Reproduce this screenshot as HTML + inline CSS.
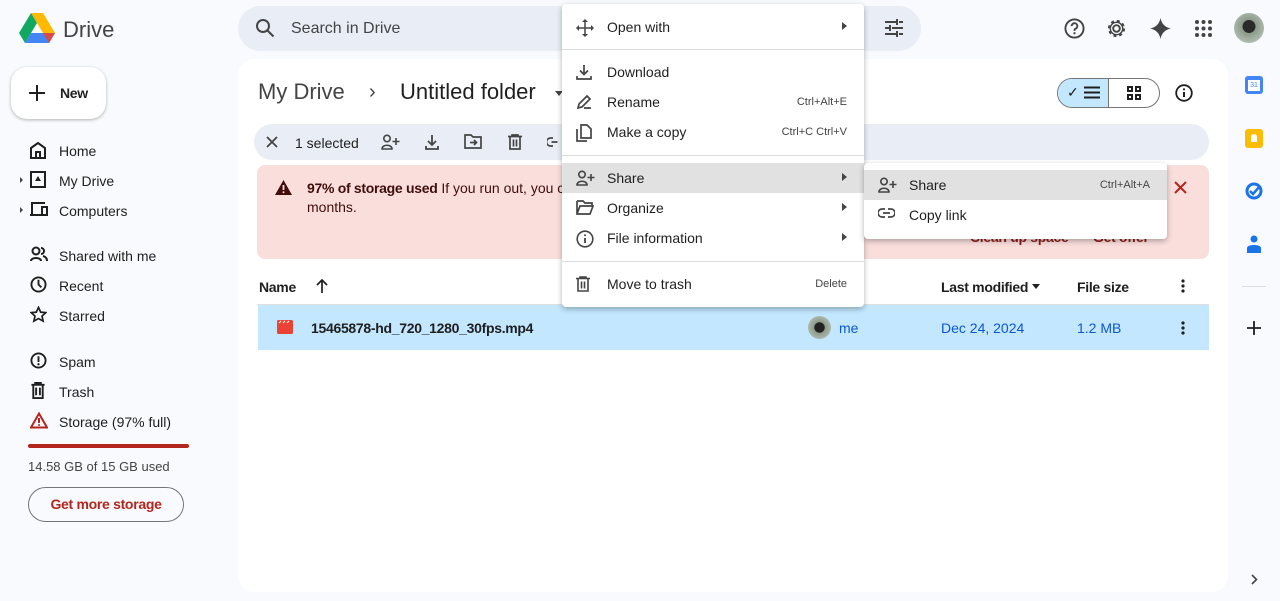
<!DOCTYPE html><html><head><style>
*{box-sizing:border-box;margin:0;padding:0}
body{width:1280px;height:601px;background:#f8fafd;font-family:"Liberation Sans",sans-serif;color:#1f1f1f;position:relative;overflow:hidden;font-size:14px}
.a{position:absolute}
svg{display:block}
.nav{position:absolute;left:30px;font-size:14px;color:#1f1f1f}
.nav svg{position:absolute;left:0;top:-2px}
.nav span{position:absolute;left:29px;top:0;white-space:nowrap}
.mi{position:absolute;left:0;width:302px;height:30px;font-size:14px}
.mi svg{position:absolute;left:14px;top:7px}
.mi .t{position:absolute;left:45px;top:7px}
.mi .k{position:absolute;right:17px;top:9px;font-size:11px;color:#444}
.mi .ar{position:absolute;right:17px;top:10px;width:0;height:0;border-left:5px solid #444;border-top:4px solid transparent;border-bottom:4px solid transparent}
.sep{position:absolute;left:0;width:302px;height:1px;background:#dadce0}
.b{font-weight:bold;letter-spacing:-0.3px}
</style></head><body>
<svg class="a" style="left:19px;top:12px" width="36" height="32" viewBox="0 0 36 32"><path d="M12 1h12l12 20h-12z" fill="#ffba00"/><path d="M12 1L0 21l6 10 12-20z" fill="#11a861"/><path d="M6 31h24l6-10H12z" fill="#4285f4"/><path d="M24 21h12l-6 10z" fill="#ea4335" opacity=".9"/></svg>
<div class="a" style="left:63px;top:17px;font-size:22px;color:#444">Drive</div>
<div class="a" style="left:238px;top:6px;width:683px;height:45px;border-radius:24px;background:#e9eef6"></div>
<svg class="a" style="left:255px;top:18px" width="20" height="20" viewBox="0 0 20 20"><circle cx="8" cy="8" r="6" fill="none" stroke="#444" stroke-width="2"/><path d="M12.5 12.5l6 6" stroke="#444" stroke-width="2"/></svg>
<div class="a" style="left:291px;top:20px;font-size:16px;color:#444">Search in Drive</div>
<svg class="a" style="left:884px;top:19px" width="20" height="18" viewBox="0 0 20 18"><path d="M1 3h11M15 3h4M1 9h4M8 9h11M1 15h11M15 15h4M13 0v6M6 6v6M13 12v6" stroke="#444" stroke-width="2"/></svg>
<svg class="a" style="left:1064px;top:18px" width="21" height="21" viewBox="0 0 22 22"><circle cx="11" cy="11" r="9.5" fill="none" stroke="#444" stroke-width="2"/><path d="M8 8.5a3 3 0 1 1 4 2.8c-1 .4-1 1.2-1 2.2" fill="none" stroke="#444" stroke-width="2"/><circle cx="11" cy="16" r="1.2" fill="#444"/></svg>
<svg class="a" style="left:1106px;top:18px" width="21" height="21" viewBox="0 0 22 22"><circle cx="11" cy="11" r="3.5" fill="none" stroke="#444" stroke-width="2"/><circle cx="11" cy="11" r="7.5" fill="none" stroke="#444" stroke-width="3" stroke-dasharray="3 2.9"/><circle cx="11" cy="11" r="6.5" fill="none" stroke="#444" stroke-width="1.5"/></svg>
<svg class="a" style="left:1150px;top:18px" width="21" height="21" viewBox="0 0 22 22"><path d="M11 0C12 6 16 10 22 11 16 12 12 16 11 22 10 16 6 12 0 11 6 10 10 6 11 0z" fill="#444"/></svg>
<svg class="a" style="left:1195px;top:20px" width="17" height="17" viewBox="0 0 17 17" fill="#444"><circle cx="2" cy="2" r="2"/><circle cx="8.5" cy="2" r="2"/><circle cx="15" cy="2" r="2"/><circle cx="2" cy="8.5" r="2"/><circle cx="8.5" cy="8.5" r="2"/><circle cx="15" cy="8.5" r="2"/><circle cx="2" cy="15" r="2"/><circle cx="8.5" cy="15" r="2"/><circle cx="15" cy="15" r="2"/></svg>
<div class="a" style="left:1234px;top:13px;width:30px;height:30px;border-radius:50%;background:radial-gradient(circle at 50% 45%,#2a2a2a 28%,#8a9a8a 30%,#c8d0c8)"></div>
<div class="a" style="left:11px;top:67px;width:95px;height:52px;border-radius:16px;background:#fff;box-shadow:0 1px 3px rgba(0,0,0,.3)"></div>
<svg class="a" style="left:28px;top:84px" width="18" height="18" viewBox="0 0 18 18"><path d="M9 1v16M1 9h16" stroke="#1f1f1f" stroke-width="2"/></svg>
<div class="a b" style="left:60px;top:85px;font-size:14px;color:#1f1f1f">New</div>
<div class="nav" style="top:143px"><svg width="16" height="18" viewBox="0 0 16 18"><path d="M1 7l7-5 7 5v10H1z M6 17v-6h4v6" fill="none" stroke="#1f1f1f" stroke-width="2"/></svg><span>Home</span></div>
<div class="a" style="left:20px;top:177px;border-left:3px solid #444;border-top:3px solid transparent;border-bottom:3px solid transparent"></div>
<div class="nav" style="top:173px"><svg width="16" height="18" viewBox="0 0 16 18"><rect x="1" y="1" width="14" height="15" fill="none" stroke="#1f1f1f" stroke-width="2"/><path d="M5 10l3-5 3 5z" fill="#1f1f1f"/></svg><span>My Drive</span></div>
<div class="a" style="left:20px;top:207px;border-left:3px solid #444;border-top:3px solid transparent;border-bottom:3px solid transparent"></div>
<div class="nav" style="top:203px"><svg width="18" height="16" viewBox="0 0 18 16"><path d="M2 13V2h13M0 14h11" fill="none" stroke="#1f1f1f" stroke-width="2"/><rect x="12" y="6" width="5" height="8" fill="none" stroke="#1f1f1f" stroke-width="2"/></svg><span>Computers</span></div>
<div class="nav" style="top:248px"><svg width="18" height="16" viewBox="0 0 18 16"><circle cx="6" cy="5" r="3.5" fill="none" stroke="#1f1f1f" stroke-width="2"/><path d="M1 15c0-4 10-4 10 0M11 2a3 3 0 0 1 0 6M13 10c2 .5 4 2 4 5" fill="none" stroke="#1f1f1f" stroke-width="2"/></svg><span>Shared with me</span></div>
<div class="nav" style="top:278px"><svg width="17" height="17" viewBox="0 0 18 18"><circle cx="9" cy="9" r="7.5" fill="none" stroke="#1f1f1f" stroke-width="2"/><path d="M9 4v5l3 3" fill="none" stroke="#1f1f1f" stroke-width="2"/></svg><span>Recent</span></div>
<div class="nav" style="top:308px"><svg width="17" height="17" viewBox="0 0 18 18"><path d="M9 1.5l2.3 5 5.4.5-4 3.7 1.2 5.3L9 13.3 4.1 16l1.2-5.3-4-3.7 5.4-.5z" fill="none" stroke="#1f1f1f" stroke-width="1.8"/></svg><span>Starred</span></div>
<div class="nav" style="top:354px"><svg width="17" height="17" viewBox="0 0 18 18"><circle cx="9" cy="9" r="7.5" fill="none" stroke="#1f1f1f" stroke-width="2"/><path d="M9 4.5v6" stroke="#1f1f1f" stroke-width="2"/><circle cx="9" cy="13" r="1.2" fill="#1f1f1f"/></svg><span>Spam</span></div>
<div class="nav" style="top:384px"><svg width="16" height="17" viewBox="0 0 16 18"><path d="M1 3h14M5 3V1h6v2M3 3v14h10V3M6 6v8M10 6v8" fill="none" stroke="#1f1f1f" stroke-width="2"/></svg><span>Trash</span></div>
<div class="nav" style="top:414px"><svg width="18" height="17" viewBox="0 0 18 17"><path d="M9 1.5L1 15.5h16z" fill="none" stroke="#b3261e" stroke-width="2"/><path d="M9 6v5" stroke="#b3261e" stroke-width="2"/><circle cx="9" cy="13" r="1" fill="#b3261e"/></svg><span>Storage (97% full)</span></div>
<div class="a" style="left:28px;top:444px;width:161px;height:4px;border-radius:2px;background:#b3261e"></div>
<div class="a" style="left:28px;top:459px;font-size:13px;color:#444">14.58 GB of 15 GB used</div>
<div class="a b" style="left:28px;top:487px;width:156px;height:35px;border:1px solid #747775;border-radius:18px;color:#b3261e;font-size:14px;text-align:center;line-height:33px">Get more storage</div>
<div class="a" style="left:238px;top:59px;width:990px;height:533px;background:#fff;border-radius:16px"></div>
<div class="a" style="left:258px;top:79px;font-size:22px;color:#444">My Drive</div>
<div class="a" style="left:369px;top:81px;font-size:20px;color:#444">›</div>
<div class="a" style="left:400px;top:79px;font-size:22px;color:#1f1f1f">Untitled folder</div>
<div class="a" style="left:555px;top:91px;border-top:5px solid #444;border-left:4px solid transparent;border-right:4px solid transparent"></div>
<div class="a" style="left:1057px;top:78px;width:103px;height:30px;border:1px solid #747775;border-radius:16px;overflow:hidden;background:#fff"><div style="width:51px;height:100%;background:#c2e7ff;border-right:1px solid #747775"></div></div>
<div class="a" style="left:1067px;top:84px;font-size:14px;color:#1f1f1f">✓</div>
<svg class="a" style="left:1084px;top:86px" width="16" height="13" viewBox="0 0 16 13"><path d="M0 1.5h16M0 6.5h16M0 11.5h16" stroke="#1f1f1f" stroke-width="2"/></svg>
<svg class="a" style="left:1127px;top:86px" width="14" height="14" viewBox="0 0 14 14" fill="none" stroke="#1f1f1f" stroke-width="2"><rect x="1" y="1" width="4" height="4"/><rect x="9" y="1" width="4" height="4"/><rect x="1" y="9" width="4" height="4"/><rect x="9" y="9" width="4" height="4"/></svg>
<svg class="a" style="left:1175px;top:84px" width="18" height="18" viewBox="0 0 18 18"><circle cx="9" cy="9" r="7.8" fill="none" stroke="#1f1f1f" stroke-width="1.8"/><path d="M9 8v5" stroke="#1f1f1f" stroke-width="2"/><circle cx="9" cy="5.3" r="1.1" fill="#1f1f1f"/></svg>
<div class="a" style="left:254px;top:124px;width:955px;height:36px;border-radius:18px;background:#e9eef6"></div>
<svg class="a" style="left:266px;top:136px" width="12" height="12" viewBox="0 0 12 12"><path d="M1 1l10 10M11 1L1 11" stroke="#444" stroke-width="1.8"/></svg>
<div class="a" style="left:295px;top:135px;font-size:14px;color:#1f1f1f">1 selected</div>
<svg class="a" style="left:381px;top:134px" width="19" height="16" viewBox="0 0 19 16" fill="none" stroke="#444" stroke-width="1.6"><circle cx="6" cy="4.5" r="3.2"/><path d="M1 15c0-5 10-5 10 0zM15 4v7M11.5 7.5h7"/></svg>
<svg class="a" style="left:425px;top:134px" width="14" height="16" viewBox="0 0 14 16" fill="none" stroke="#444" stroke-width="1.8"><path d="M7 1v10M3 7l4 4 4-4M1 12v3h12v-3"/></svg>
<svg class="a" style="left:464px;top:134px" width="18" height="15" viewBox="0 0 18 15" fill="none" stroke="#444" stroke-width="1.7"><path d="M1 1h6l2 2h8v11H1zM6 8.5h6M10 6l2.5 2.5L10 11"/></svg>
<svg class="a" style="left:508px;top:134px" width="14" height="16" viewBox="0 0 14 16" fill="none" stroke="#444" stroke-width="1.7"><path d="M0 2.5h14M4 2.5V1h6v1.5M2 2.5V15h10V2.5M5.5 5.5v7M8.5 5.5v7"/></svg>
<svg class="a" style="left:547px;top:136px" width="15" height="12" viewBox="0 0 15 12" fill="none" stroke="#444" stroke-width="1.7"><path d="M6 2H3.5a4 4 0 0 0 0 8H6M4.5 6h6"/></svg>
<div class="a" style="left:257px;top:165px;width:952px;height:94px;border-radius:8px;background:#f9dedc"></div>
<svg class="a" style="left:275px;top:180px" width="17" height="15" viewBox="0 0 17 15"><path d="M8.5 0L17 15H0z" fill="#410e0b"/><path d="M8.5 5v5" stroke="#f9dedc" stroke-width="1.8"/><circle cx="8.5" cy="12.2" r="1" fill="#f9dedc"/></svg>
<div class="a" style="left:307px;top:180px;font-size:14px;color:#410e0b;white-space:nowrap"><b style="letter-spacing:-0.3px">97% of storage used</b> If you run out, you ca</div>
<div class="a" style="left:307px;top:199px;font-size:14px;color:#410e0b">months.</div>
<div class="a b" style="left:970px;top:229px;font-size:14px;color:#8c1d18">Clean up space</div>
<div class="a b" style="left:1093px;top:229px;font-size:14px;color:#8c1d18">Get offer</div>
<svg class="a" style="left:1174px;top:181px" width="13" height="13" viewBox="0 0 13 13"><path d="M1 1l11 11M12 1L1 12" stroke="#b3261e" stroke-width="2"/></svg>
<div class="a b" style="left:259px;top:279px;font-size:14px;color:#1f1f1f">Name</div>
<svg class="a" style="left:316px;top:279px" width="12" height="14" viewBox="0 0 12 14"><path d="M6 14V2M1 6l5-5 5 5" fill="none" stroke="#1f1f1f" stroke-width="1.7"/></svg>
<div class="a b" style="left:941px;top:279px;font-size:14px;color:#1f1f1f">Last modified</div>
<div class="a" style="left:1032px;top:284px;border-top:5px solid #1f1f1f;border-left:4px solid transparent;border-right:4px solid transparent"></div>
<div class="a b" style="left:1077px;top:279px;font-size:14px;color:#1f1f1f">File size</div>
<svg class="a" style="left:1181px;top:279px" width="4" height="14" viewBox="0 0 4 14" fill="#1f1f1f"><circle cx="2" cy="2" r="1.6"/><circle cx="2" cy="7" r="1.6"/><circle cx="2" cy="12" r="1.6"/></svg>
<div class="a" style="left:257px;top:304px;width:952px;height:1px;background:#e0e0e0"></div>
<div class="a" style="left:258px;top:305px;width:951px;height:45px;background:#c2e7ff"></div>
<svg class="a" style="left:277px;top:320px" width="16" height="14" viewBox="0 0 16 14"><rect width="16" height="14" rx="1.5" fill="#ea4335"/><path d="M2 3l2-2M6 3l2-2M10 3l2-2" stroke="#fff" stroke-width="1"/></svg>
<div class="a b" style="left:311px;top:320px;font-size:14px;color:#1f1f1f">15465878-hd_720_1280_30fps.mp4</div>
<div class="a" style="left:808px;top:316px;width:23px;height:23px;border-radius:50%;background:radial-gradient(circle at 50% 50%,#222 30%,#8a9a8a 34%,#c8d0c8)"></div>
<div class="a" style="left:839px;top:320px;font-size:14px;color:#0b57d0">me</div>
<div class="a" style="left:941px;top:320px;font-size:14px;color:#0b57d0">Dec 24, 2024</div>
<div class="a" style="left:1077px;top:320px;font-size:14px;color:#0b57d0">1.2 MB</div>
<svg class="a" style="left:1181px;top:321px" width="4" height="14" viewBox="0 0 4 14" fill="#1f1f1f"><circle cx="2" cy="2" r="1.6"/><circle cx="2" cy="7" r="1.6"/><circle cx="2" cy="12" r="1.6"/></svg>
<div class="a" style="left:1245px;top:76px;width:18px;height:18px;border-radius:3px;background:#4285f4"><div style="margin:4px 3px;width:12px;height:11px;background:#fff;font-size:7px;color:#4285f4;text-align:center;line-height:11px">31</div></div>
<div class="a" style="left:1245px;top:129px;width:18px;height:19px;border-radius:3px;background:#fbbc04"><div style="margin:5px auto;width:6px;height:8px;border-radius:3px 3px 1px 1px;background:#fff"></div></div>
<svg class="a" style="left:1245px;top:182px" width="18" height="18" viewBox="0 0 18 18"><circle cx="9" cy="9" r="7" fill="none" stroke="#1a73e8" stroke-width="3"/><path d="M5 9l3 3 7-8" fill="none" stroke="#1a73e8" stroke-width="2.5"/></svg>
<svg class="a" style="left:1247px;top:235px" width="14" height="18" viewBox="0 0 14 18" fill="#1a73e8"><circle cx="7" cy="4" r="3.5"/><path d="M0 18v-5c0-4 14-4 14 0v5z"/></svg>
<div class="a" style="left:1242px;top:286px;width:24px;height:1px;background:#dadce0"></div>
<svg class="a" style="left:1247px;top:321px" width="14" height="14" viewBox="0 0 14 14"><path d="M7 0v14M0 7h14" stroke="#1f1f1f" stroke-width="1.8"/></svg>
<svg class="a" style="left:1251px;top:574px" width="7" height="11" viewBox="0 0 7 11"><path d="M1 1l4.5 4.5L1 10" fill="none" stroke="#444" stroke-width="1.6"/></svg>
<div class="a" style="left:562px;top:4px;width:302px;height:303px;background:#fff;border-radius:4px;box-shadow:0 2px 6px rgba(0,0,0,.3)">
 <div class="mi" style="top:8px"><svg width="18" height="18" viewBox="0 0 18 18" fill="#444"><path d="M9 0l3 3H6zM9 18l-3-3h6zM0 9l3-3v6zM18 9l-3 3V6z"/><path d="M9 3v12M3 9h12" stroke="#444" stroke-width="1.5"/></svg><span class="t">Open with</span><i class="ar"></i></div>
 <div class="sep" style="top:45px"></div>
 <div class="mi" style="top:53px"><svg width="16" height="16" viewBox="0 0 16 16" fill="none" stroke="#444" stroke-width="1.7"><path d="M8 1v9M4 6.5l4 4 4-4M1 12v3h14v-3"/></svg><span class="t">Download</span></div>
 <div class="mi" style="top:83px"><svg width="16" height="16" viewBox="0 0 16 16" fill="none" stroke="#444" stroke-width="1.7"><path d="M2 14l1-4 8-8 3 3-8 8zM8 14h7"/></svg><span class="t">Rename</span><span class="k">Ctrl+Alt+E</span></div>
 <div class="mi" style="top:113px"><svg width="16" height="18" viewBox="0 0 16 18" fill="none" stroke="#444" stroke-width="1.7"><path d="M5 1h6l4 4v9H5zM1 5v12h10"/></svg><span class="t">Make a copy</span><span class="k">Ctrl+C Ctrl+V</span></div>
 <div class="sep" style="top:151px"></div>
 <div class="mi" style="top:159px;background:#e1e1e1"><svg width="19" height="16" viewBox="0 0 19 16" fill="none" stroke="#444" stroke-width="1.6"><circle cx="6" cy="4.5" r="3.2"/><path d="M1 15c0-5 10-5 10 0zM15 4v7M11.5 7.5h7"/></svg><span class="t">Share</span><i class="ar"></i></div>
 <div class="mi" style="top:189px"><svg width="18" height="15" viewBox="0 0 18 15" fill="none" stroke="#444" stroke-width="1.7"><path d="M1 1h6l2 2h7v3M1 1v13h13l3-8H4L1 14"/></svg><span class="t">Organize</span><i class="ar"></i></div>
 <div class="mi" style="top:219px"><svg width="18" height="18" viewBox="0 0 18 18"><circle cx="9" cy="9" r="7.8" fill="none" stroke="#444" stroke-width="1.6"/><path d="M9 8v5" stroke="#444" stroke-width="1.8"/><circle cx="9" cy="5.3" r="1" fill="#444"/></svg><span class="t">File information</span><i class="ar"></i></div>
 <div class="sep" style="top:257px"></div>
 <div class="mi" style="top:265px"><svg width="14" height="16" viewBox="0 0 14 16" fill="none" stroke="#444" stroke-width="1.6"><path d="M0 2.5h14M4 2.5V1h6v1.5M2 2.5V15h10V2.5M5.5 5.5v7M8.5 5.5v7"/></svg><span class="t">Move to trash</span><span class="k">Delete</span></div>
</div>
<div class="a" style="left:864px;top:163px;width:303px;height:76px;background:#fff;border-radius:4px;box-shadow:0 2px 6px rgba(0,0,0,.3)">
 <div class="mi" style="top:7px;width:303px;background:#e1e1e1"><svg width="19" height="16" viewBox="0 0 19 16" fill="none" stroke="#444" stroke-width="1.6"><circle cx="6" cy="4.5" r="3.2"/><path d="M1 15c0-5 10-5 10 0zM15 4v7M11.5 7.5h7"/></svg><span class="t">Share</span><span class="k">Ctrl+Alt+A</span></div>
 <div class="mi" style="top:37px;width:303px"><svg width="17" height="12" viewBox="0 0 17 12" fill="none" stroke="#444" stroke-width="1.7"><path d="M7 2H4a4 4 0 0 0 0 8h3M10 2h3a4 4 0 0 1 0 8h-3M5 6h7"/></svg><span class="t">Copy link</span></div>
</div>
</body></html>
